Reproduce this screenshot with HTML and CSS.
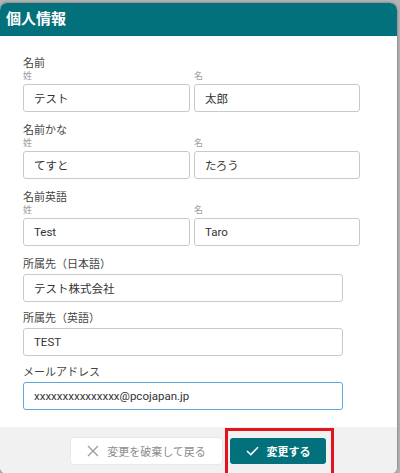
FILE: index.html
```html
<!DOCTYPE html>
<html lang="ja">
  <head>
    <meta charset="UTF-8" />
    <meta name="viewport" content="width=device-width, initial-scale=1.0" />
    <title>個人情報</title>
    <link rel="stylesheet" href="styles.css">
  </head>
  <body>
    <div class="dialog">
      <div class="dialog-head">個人情報</div>
      <form class="dialog-body">
        <div class="group">
          <div class="label">名前</div>
          <div class="pair">
            <div class="col">
              <div class="sub">姓</div>
              <input type="text" class="field" value="テスト" />
            </div>
            <div class="col">
              <div class="sub">名</div>
              <input type="text" class="field" value="太郎" />
            </div>
          </div>
        </div>
        <div class="group">
          <div class="label">名前かな</div>
          <div class="pair">
            <div class="col">
              <div class="sub">姓</div>
              <input type="text" class="field" value="てすと" />
            </div>
            <div class="col">
              <div class="sub">名</div>
              <input type="text" class="field" value="たろう" />
            </div>
          </div>
        </div>
        <div class="group">
          <div class="label">名前英語</div>
          <div class="pair">
            <div class="col">
              <div class="sub">姓</div>
              <input type="text" class="field" value="Test" />
            </div>
            <div class="col">
              <div class="sub">名</div>
              <input type="text" class="field" value="Taro" />
            </div>
          </div>
        </div>
        <div class="group single">
          <div class="label">所属先（日本語）</div>
          <input type="text" class="field wide" value="テスト株式会社" />
        </div>
        <div class="group single">
          <div class="label">所属先（英語）</div>
          <input type="text" class="field wide" value="TEST" />
        </div>
        <div class="group single">
          <div class="label">メールアドレス</div>
          <input type="text" class="field wide active" value="xxxxxxxxxxxxxxx@pcojapan.jp" />
        </div>
      </form>
      <div class="dialog-foot">
        <button type="button" class="btn cancel">
          <svg width="12" height="12" viewBox="0 0 12 12"><path d="M1 1L11 11M11 1L1 11" stroke="#9a9a9a" stroke-width="1.3" fill="none"/></svg>
          変更を破棄して戻る
        </button>
        <button type="button" class="btn save">
          <svg width="13" height="10" viewBox="0 0 13 10"><path d="M1 5L4.8 8.6L12 1.2" stroke="#fff" stroke-width="1.6" fill="none"/></svg>
          変更する
        </button>
      </div>
    </div>
  </body>
</html>
```
FILE: styles.css
```css
body {
  margin: 0;
  background-color: #b4b4b4;
  font-family: Roboto, "Noto Sans CJK JP", sans-serif;
  overflow: hidden;
}

.dialog {
  margin-top: 3px;
  width: 397px;
  background-color: white;
  border-radius: 7px;
  overflow: hidden;
  box-shadow: 0 0 3px rgba(0, 0, 0, 0.45);
}

.dialog-head {
  height: 33px;
  line-height: 33px;
  padding-left: 6px;
  background-color: #03717b;
  color: white;
  font-size: 15px;
  font-weight: bold;
}

.dialog-body {
  padding: 20px 0 17px 23px;
}

.group {
  margin-bottom: 11px;
}
.group.single {
  margin-bottom: 9px;
}
.group:last-child {
  margin-bottom: 0;
}

.label {
  font-size: 11px;
  line-height: 15px;
  color: #444;
}
.single .label {
  margin-bottom: 2px;
}

.sub {
  font-size: 9px;
  line-height: 11px;
  margin-bottom: 2px;
  color: #a0a0a0;
}

.pair {
  display: grid;
  grid-template-columns: 167px 166px;
  gap: 4px;
}

.field {
  display: block;
  box-sizing: border-box;
  width: 100%;
  height: 28px;
  margin: 0;
  padding: 0 10px;
  border: 1px solid #c9c9c9;
  border-radius: 3px;
  font-family: Roboto, "Noto Sans CJK JP", sans-serif;
  font-size: 11.5px;
  color: #333;
  background: white;
  outline: none;
}
.field.wide {
  width: 320px;
}
.field.active {
  border-color: #5ea8da;
}

.dialog-foot {
  display: flex;
  justify-content: center;
  gap: 8px;
  padding: 11px 0 10px;
  background-color: #f1f1f1;
}

.btn {
  display: flex;
  align-items: center;
  justify-content: center;
  gap: 8px;
  height: 26px;
  border: none;
  border-radius: 3px;
  font-family: Roboto, "Noto Sans CJK JP", sans-serif;
  font-size: 11px;
  padding: 0;
}

.cancel {
  width: 151px;
  background-color: white;
  color: #8d8d8d;
  box-shadow: 0 0 2px rgba(0, 0, 0, 0.12);
}

.save {
  position: relative;
  width: 96px;
  background-color: #03717b;
  color: white;
  font-weight: bold;
}

/* red highlight frame around the save button */
.save::after {
  content: "";
  position: absolute;
  left: -5px;
  right: -8px;
  top: -10px;
  bottom: -12px;
  border: 3px solid #e3141d;
}
```
